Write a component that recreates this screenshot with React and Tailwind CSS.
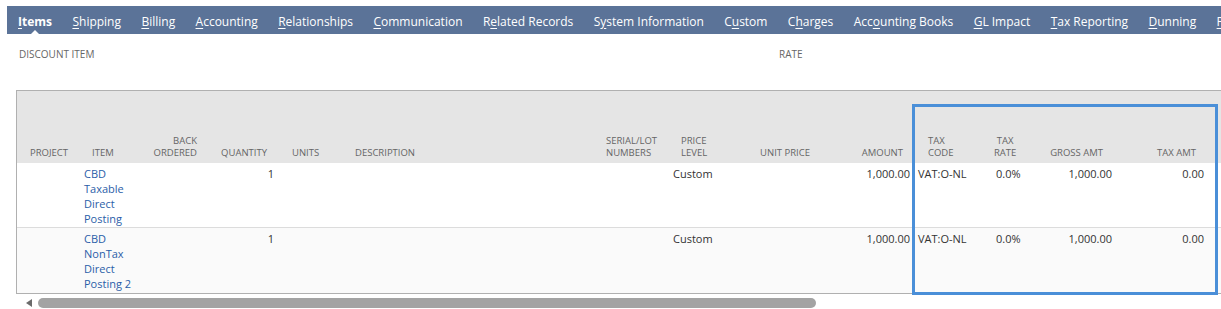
import React from "react";

const tabs = [
  { pre: "", u: "I", post: "tems", active: true },
  { pre: "", u: "S", post: "hipping" },
  { pre: "", u: "B", post: "illing" },
  { pre: "", u: "A", post: "ccounting" },
  { pre: "", u: "R", post: "elationships" },
  { pre: "", u: "C", post: "ommunication" },
  { pre: "R", u: "e", post: "lated Records" },
  { pre: "S", u: "y", post: "stem Information" },
  { pre: "C", u: "u", post: "stom" },
  { pre: "C", u: "h", post: "arges" },
  { pre: "Acc", u: "o", post: "unting Books" },
  { pre: "", u: "G", post: "L Impact" },
  { pre: "", u: "T", post: "ax Reporting" },
  { pre: "", u: "D", post: "unning" },
  { pre: "", u: "P", post: "romotions" },
];

const cols = "grid-cols-[61px_67px_57px_75px_63px_255px_73px_67px_83px_95px_72px_50px_85px_90px_40px]";

function H({ children, className = "" }) {
  return <div className={"flex flex-col justify-end pb-[4px] leading-[12px] " + className}>{children}</div>;
}

function Row({ item, bg }) {
  return (
    <div className={"grid " + cols + " h-[65px] text-[11px] leading-[15px] text-[#333] pt-[3px] " + bg}>
      <div />
      <div className="pl-[6px] text-[#2b5ea8]"><div className="w-[52px]">{item}</div></div>
      <div />
      <div className="text-right pr-[3px]">1</div>
      <div />
      <div />
      <div />
      <div className="pl-[5px]">Custom</div>
      <div />
      <div className="text-right pr-[3px]">1,000.00</div>
      <div className="pl-[5px]">VAT:O-NL</div>
      <div className="pl-[11px]">0.0%</div>
      <div className="text-right pr-[8px]">1,000.00</div>
      <div className="text-right pr-[6px]">0.00</div>
      <div />
    </div>
  );
}

export default function App() {
  return (
    <div className="relative w-[1221px] h-[309px] overflow-hidden bg-white" style={{ fontFamily: '"Open Sans", "Liberation Sans", sans-serif' }}>
      {/* Tab bar */}
      <div className="ml-[7px] mt-[6px] h-[28px] w-[1300px] bg-[#5b7398] flex items-center gap-[20.4px] pl-[11px] pt-[3px] text-[12px] text-white whitespace-nowrap">
        {tabs.map((t, i) => (
          <span key={i} className={"relative " + (t.active ? "font-bold" : "")}>
            {t.pre}
            <span className="underline underline-offset-2">{t.u}</span>
            {t.post}
            {t.active && (
              <span className="absolute left-1/2 -translate-x-1/2 top-[17px] w-0 h-0 border-l-[5px] border-r-[5px] border-b-[5px] border-l-transparent border-r-transparent border-b-white" />
            )}
          </span>
        ))}
      </div>

      {/* Field labels */}
      <div className="flex mt-[14px] ml-[19px] text-[10px] leading-[12px] text-[#666]">
        <div className="w-[760px]">DISCOUNT ITEM</div>
        <div>RATE</div>
      </div>

      {/* Table */}
      <div className="mt-[30px] ml-[16px] w-[1240px] border-l border-t border-b border-[#b0b0b0]">
        <div className={"grid " + cols + " h-[72px] bg-[#e5e5e5] text-[9.5px] text-[#666] uppercase"}>
          <H className="pl-[13px]">Project</H>
          <H className="pl-[14px]">Item</H>
          <H className="text-right pr-[5px]"><div>Back</div><div>Ordered</div></H>
          <H className="text-right pr-[10px]">Quantity</H>
          <H className="pl-[15px]">Units</H>
          <H className="pl-[15px]">Description</H>
          <H className="pl-[11px]"><div>Serial/Lot</div><div>Numbers</div></H>
          <H className="pl-[13px]"><div>Price</div><div>Level</div></H>
          <H className="text-right pr-[8px]">Unit Price</H>
          <H className="text-right pr-[10px]">Amount</H>
          <H className="pl-[15px]"><div>Tax</div><div>Code</div></H>
          <H className="pl-[9px] items-start"><div className="text-center"><div>Tax</div><div>Rate</div></div></H>
          <H className="text-right pr-[17px]">Gross Amt</H>
          <H className="text-right pr-[14px]">Tax Amt</H>
          <H />
        </div>
        <Row item="CBD Taxable Direct Posting" bg="bg-white border-b border-[#dcdcdc]" />
        <Row item="CBD NonTax Direct Posting 2" bg="bg-[#fafafa]" />
      </div>

      {/* Scrollbar */}
      <div className="flex items-center h-[14px] mt-[2px]">
        <span className="ml-[26px] w-0 h-0 border-t-[4px] border-b-[4px] border-r-[6px] border-t-transparent border-b-transparent border-r-[#6b6b6b]" />
        <div className="ml-[6px] w-[778px] h-[10px] rounded-full bg-[#a3a3a3]" />
      </div>

      {/* Highlight box */}
      <div className="absolute left-[912px] top-[104px] w-[306px] h-[191px] border-[3px] border-[#4a8fd8]" />
    </div>
  );
}
